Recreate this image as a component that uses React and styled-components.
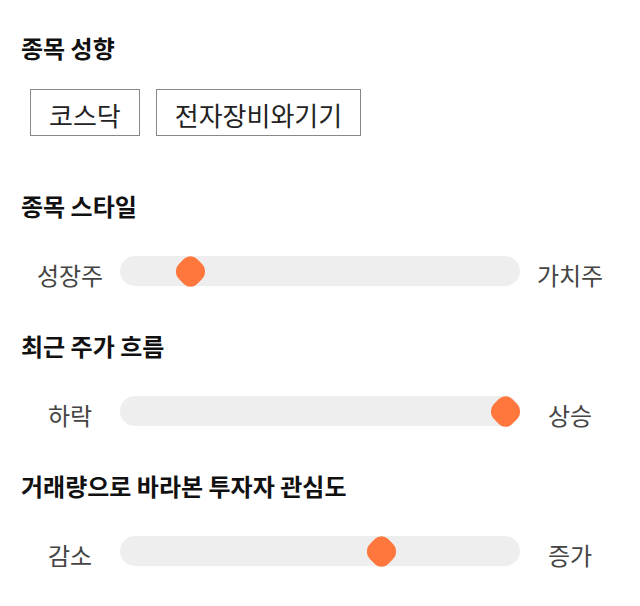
import React from "react";
import styled, { createGlobalStyle } from "styled-components";

const Global = createGlobalStyle`
  html, body { margin: 0; padding: 0; background: #fff; }
  body { font-family: "Noto Sans CJK KR", "Noto Sans", sans-serif; }
`;

const Page = styled.div`
  width: 640px;
  min-height: 606px;
  box-sizing: border-box;
  padding: 33px 20px 0 20px;
  display: flex;
  flex-direction: column;
`;

const Section = styled.section`
  display: flex;
  flex-direction: column;
  margin-top: ${(p) => p.$top || 0}px;
`;

const Title = styled.h2`
  margin: 0 0 0 1px;
  font-size: 24px;
  line-height: 30px;
  font-weight: 700;
  color: #111;
`;

const Chips = styled.div`
  display: flex;
  gap: 16px;
  margin: 26px 0 0 10px;
`;

const Chip = styled.div`
  box-sizing: border-box;
  height: 47px;
  padding: 5px 18px 0;
  border: 1px solid #888;
  display: flex;
  align-items: center;
  font-size: 26px;
  line-height: 30px;
  color: #222;
`;

const Row = styled.div`
  display: grid;
  grid-template-columns: 100px 400px 100px;
  align-items: center;
  margin-top: 34px;
  height: 30px;
`;

const Label = styled.span`
  text-align: center;
  font-size: 24px;
  line-height: 24px;
  color: #444;
  padding-top: 8px;
`;

const Track = styled.div`
  position: relative;
  height: 30px;
  background: #eeeeee;
  border-radius: 15px;
`;

const Thumb = styled.div`
  position: absolute;
  top: 1.5px;
  width: 27px;
  height: 27px;
  margin-left: 1.5px;
  background: #ff773d;
  border-radius: 9px 11px 9px 11px;
  transform: rotate(45deg);
`;

function Slider({ left, right, value }) {
  return (
    <Row>
      <Label>{left}</Label>
      <Track>
        <Thumb style={{ left: `${(value / 100) * 370}px` }} />
      </Track>
      <Label>{right}</Label>
    </Row>
  );
}

export default function App() {
  return (
    <>
      <Global />
      <Page>
        <Section>
          <Title>종목 성향</Title>
          <Chips>
            <Chip>코스닥</Chip>
            <Chip>전자장비와기기</Chip>
          </Chips>
        </Section>
        <Section $top={55}>
          <Title>종목 스타일</Title>
          <Slider left="성장주" right="가치주" value={15} />
        </Section>
        <Section $top={46}>
          <Title>최근 주가 흐름</Title>
          <Slider left="하락" right="상승" value={100} />
        </Section>
        <Section $top={46}>
          <Title>거래량으로 바라본 투자자 관심도</Title>
          <Slider left="감소" right="증가" value={66.5} />
        </Section>
      </Page>
    </>
  );
}
